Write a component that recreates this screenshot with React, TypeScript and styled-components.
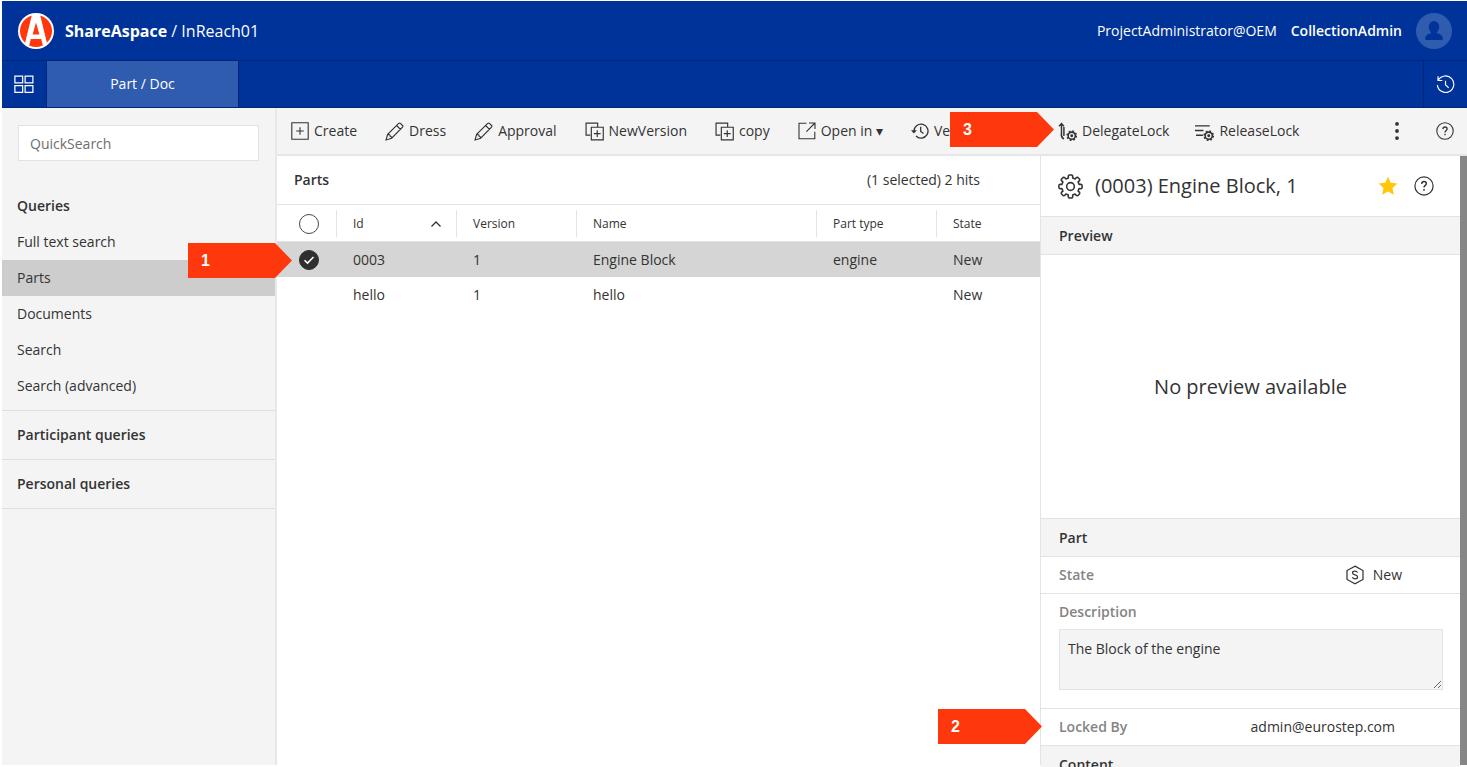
import React from "react";
import styled, { createGlobalStyle, css } from "styled-components";

const GlobalStyle = createGlobalStyle`
  *, *::before, *::after { box-sizing: border-box; }
  body {
    margin: 0;
    background: #fff;
    color: #333;
    font-family: "Open Sans", "Noto Sans", sans-serif;
    font-size: 14px;
    line-height: 20px;
  }
  button, input, textarea { font: inherit; color: inherit; }
  a { color: inherit; text-decoration: none; }
  ul { list-style: none; margin: 0; padding: 0; }
  h1, h2 { margin: 0; font-size: inherit; }
`;

const line = "#e3e3e3";

const Page = styled.div`
  display: flex;
  flex-direction: column;
  height: 100vh;
  padding: 1px 0 2px 2px;
  overflow: hidden;
`;

const TopBar = styled.header`
  display: flex;
  flex: none;
  align-items: center;
  justify-content: space-between;
  height: 60px;
  padding: 0 15px 0 16px;
  background: #003399;
  border-bottom: 1px solid #00267a;
  color: #fff;
`;

const Brand = styled.div`
  display: flex;
  align-items: center;
  gap: 11px;
  font-size: 16px;
`;

const User = styled.div`
  display: flex;
  align-items: center;
  gap: 14px;
`;

const UserRole = styled.span`
  font-weight: 600;
`;

const NavBar = styled.nav`
  display: flex;
  flex: none;
  height: 47px;
  background: #003399;
  border-bottom: 1px solid #00267a;
  color: #fff;
`;

const NavButton = styled.button<{ $end?: boolean }>`
  display: flex;
  align-items: center;
  justify-content: center;
  width: 44px;
  padding: 0;
  background: none;
  border: 0;
  ${(p) =>
    p.$end &&
    css`
      margin-left: auto;
      border-left: 1px solid #00267a;
    `}
`;

const NavTab = styled.a`
  display: flex;
  align-items: center;
  justify-content: center;
  width: 193px;
  background: #305cb0;
  border: 1px solid #00267a;
  border-width: 0 1px;
`;

const Body = styled.div`
  display: flex;
  flex: 1;
  min-height: 0;
`;

const Sidebar = styled.aside`
  flex: none;
  width: 275px;
  background: #f4f4f4;
  border-right: 2px solid #e8e8e8;
`;

const SearchBox = styled.input`
  display: block;
  width: 241px;
  height: 36px;
  margin: 17px 16px 27px;
  padding: 0 11px;
  background: #fff;
  border: 1px solid #e2e2e2;
  border-radius: 0;
  &::placeholder { color: #6e6e6e; opacity: 1; }
`;

const QueryGroup = styled.section<{ $open?: boolean }>`
  padding-bottom: ${(p) => (p.$open ? "6px" : "0")};
  border-bottom: 1px solid #dfdfdf;
`;

const QueryHeading = styled.h2<{ $compact?: boolean }>`
  padding: 0 15px;
  font-weight: 600;
  line-height: ${(p) => (p.$compact ? "36px" : "48px")};
`;

const QueryLink = styled.a<{ $active?: boolean }>`
  display: block;
  padding: 0 15px;
  line-height: 36px;
  background: ${(p) => (p.$active ? "#cdcdcd" : "transparent")};
`;

const Workspace = styled.div`
  display: flex;
  flex: 1;
  flex-direction: column;
  min-width: 0;
`;

const Toolbar = styled.div`
  position: relative;
  display: flex;
  flex: none;
  height: 48px;
  background: #f4f4f4;
  border-bottom: 2px solid #e6e6e6;
`;

const ToolGroup = styled.div<{ $side?: boolean }>`
  display: flex;
  align-items: center;
  min-width: 0;
  overflow: hidden;
  ${(p) =>
    p.$side
      ? css`
          flex: none;
          gap: 26px;
          width: 427px;
          padding: 0 13px 0 18px;
        `
      : css`
          flex: 1;
          gap: 28px;
          padding-left: 14px;
        `}
`;

const ToolButton = styled.button<{ $push?: boolean }>`
  display: flex;
  flex: none;
  align-items: center;
  gap: 5px;
  padding: 0;
  background: none;
  border: 0;
  white-space: nowrap;
  margin-left: ${(p) => (p.$push ? "auto" : "0")};
  margin-right: ${(p) => (p.$push ? "4px" : "0")};
`;

const Panels = styled.div`
  display: flex;
  flex: 1;
  min-height: 0;
`;

const ListPanel = styled.main`
  position: relative;
  flex: 1;
  min-width: 0;
`;

const ListHeader = styled.div`
  display: flex;
  align-items: center;
  justify-content: space-between;
  height: 49px;
  padding: 0 60px 0 17px;
  border-bottom: 1px solid ${line};
`;

const Title = styled.h2`
  font-weight: 600;
`;

const Grid = styled.table`
  width: 100%;
  table-layout: fixed;
  border-collapse: collapse;
  text-align: left;
`;

const HeadCell = styled.th`
  height: 37px;
  padding: 0;
  font-size: 12px;
  font-weight: 400;
  box-shadow: inset 0 -1px ${line};
`;

const HeadLabel = styled.div`
  display: flex;
  align-items: center;
  justify-content: space-between;
  height: 27px;
  padding: 0 14px 0 16px;
  border-left: 1px solid ${line};
`;

const Row = styled.tr<{ $selected?: boolean }>`
  background: ${(p) => (p.$selected ? "#d5d5d5" : "transparent")};
`;

const Cell = styled.td`
  height: 35px;
  padding: 0 17px;
`;

const PickCell = styled.td`
  padding: 0 0 0 22px;
`;

const Pick = styled.label`
  position: relative;
  display: block;
  width: 20px;
  height: 20px;
  svg { position: absolute; inset: 0; pointer-events: none; }
`;

const PickBox = styled.input<{ $bare?: boolean }>`
  display: block;
  appearance: none;
  width: 20px;
  height: 20px;
  margin: 0;
  border: 1px solid ${(p) => (p.$bare ? "transparent" : "#4a4a4a")};
  border-radius: 50%;
  &:checked { background: #2f2f2f; border-color: #2f2f2f; }
`;

const DetailPanel = styled.aside`
  flex: none;
  width: 427px;
  border-left: 1px solid ${line};
  border-right: 7px solid #868686;
`;

const DetailTitle = styled.div`
  display: flex;
  align-items: center;
  gap: 12px;
  height: 61px;
  padding: 0 26px 0 17px;
  border-bottom: 1px solid ${line};
`;

const DetailName = styled.h1`
  flex: 1;
  font-size: 20px;
  font-weight: 400;
  line-height: 28px;
`;

const IconButton = styled.button`
  display: flex;
  padding: 0;
  background: none;
  border: 0;
`;

const TitleActions = styled.div`
  display: flex;
  align-items: center;
  gap: 16px;
`;

const SectionBar = styled.h2`
  height: 38px;
  padding: 0 18px;
  background: #f4f4f4;
  border-bottom: 1px solid ${line};
  font-weight: 600;
  line-height: 38px;
`;

const Preview = styled.div`
  display: flex;
  align-items: center;
  justify-content: center;
  height: 264px;
  border-bottom: 1px solid ${line};
  font-size: 20px;
`;

const Field = styled.div<{ $inset: number }>`
  position: relative;
  display: flex;
  align-items: center;
  justify-content: space-between;
  height: 37px;
  padding: 0 ${(p) => p.$inset}px 0 18px;
  border-bottom: 1px solid ${line};
`;

const FieldName = styled.span`
  font-weight: 600;
  color: #848484;
`;

const FieldValue = styled.span`
  display: flex;
  align-items: center;
  gap: 8px;
`;

const NoteField = styled.div`
  height: 115px;
  padding: 8px 17px 0 18px;
  border-bottom: 1px solid ${line};
`;

const NoteLabel = styled.label`
  display: block;
  font-weight: 600;
  color: #848484;
`;

const NoteText = styled.textarea`
  display: block;
  width: 100%;
  height: 61px;
  margin-top: 7px;
  padding: 9px 8px;
  background: #f4f4f4;
  border: 1px solid ${line};
  border-radius: 0;
`;

const calloutPlace = {
  row: css`top: 87px; left: -89px;`,
  lock: css`top: 0; left: -103px;`,
  tool: css`top: 4px; right: 413px;`,
};

const Callout = styled.div<{ $at: keyof typeof calloutPlace }>`
  position: absolute;
  z-index: 2;
  width: 104px;
  height: 35px;
  padding-left: 13px;
  background: #ff370c;
  clip-path: polygon(0 0, 87px 0, 100% 50%, 87px 100%, 0 100%);
  color: #fff;
  font: bold 16px/35px "Liberation Sans", sans-serif;
  ${(p) => calloutPlace[p.$at]}
`;

type IconProps = { size?: number; children: React.ReactNode };
const Icon = ({ size = 18, children }: IconProps) => (
  <svg width={size} height={size} viewBox="0 0 18 18" fill="none" stroke="currentColor" strokeWidth="1.1" aria-hidden="true">
    {children}
  </svg>
);

const Logo = () => (
  <svg width="36" height="36" viewBox="0 0 36 36" aria-hidden="true">
    <circle cx="18" cy="18" r="18" fill="#fff" />
    <circle cx="18" cy="18" r="16" fill="#ff370c" />
    <path d="M14 1.500H22L29.300 31.500L25.300 34L23.200 26H12.800L10.700 34L6.700 31.500ZM18 9.500L14.600 21.500H21.400Z" fill="#fff" fillRule="evenodd" />
  </svg>
);

const Avatar = () => (
  <svg width="36" height="36" viewBox="0 0 36 36" aria-hidden="true">
    <circle cx="18" cy="18" r="18" fill="#305cb0" />
    <path d="M18 8a5.2 5.6 0 0 1 5.2 5.8c0 2.4-1 4.4-2.3 5.4v1c3 .6 5.8 2 6 5.4 0 1-.5 1.4-1.3 1.4H10.400c-.8 0-1.300-.4-1.300-1.400.2-3.400 3-4.800 6-5.400v-1c-1.300-1-2.300-3-2.300-5.400A5.200 5.600 0 0 1 18 8Z" fill="#003399" />
  </svg>
);

const TilesIcon = () => (
  <Icon size={20}>
    <path d="M.8 2h7v6h-7zM10 2h7v6h-7zM.8 10.500h7v6h-7zM10 10.500h7v6h-7z" />
  </Icon>
);

const HistoryIcon = () => (
  <Icon size={19}>
    <path d="M2.300 4.800A7.800 7.800 0 1 1 1.300 9.600M1.900 1.200V5.200H6M9 5.500V9.200L12 12.200" />
  </Icon>
);

const CreateIcon = () => (
  <Icon>
    <path d="M.8.8h16.400v16.400H.8zM9 5.200v7.600M5.200 9h7.600" />
  </Icon>
);

const PencilIcon = () => (
  <Icon size={19}>
    <path d="M1 17l1.500-5.300L13 1.300q.8-.6 1.600 0l2 2q.7.800 0 1.600L6.300 15.400zM11 3.300l3.700 3.700M2.500 11.700c1.800 0 2.600.8 2.400 1.800.9 0 1.500.8 1.400 1.900" />
  </Icon>
);

const CopyIcon = () => (
  <Icon size={19}>
    <path d="M5 12.500H1V1h11v4M6 5h11.300v12H6zM11.600 7.800v6.400M8.400 11h6.400" />
  </Icon>
);

const OpenIcon = () => (
  <Icon>
    <path d="M8.500 1.200H1v15.600h15.800V9.800M11 1h6v6M17 1L8.400 9.600" />
  </Icon>
);

const VersionIcon = () => (
  <Icon>
    <path d="M3 9a7 7 0 1 1 2 5M9.700 4.800V9.500l2.800 2" strokeWidth="1.300" />
    <path d="M0 8.300h5.800L2.900 11.500z" fill="currentColor" stroke="none" />
  </Icon>
);

const SmallGear = () => (
  <>
    <circle cx="13" cy="13" r="3.400" strokeWidth="1.500" />
    <circle cx="13" cy="13" r="4.400" strokeWidth="1.400" strokeDasharray="1.700 1.756" />
    <circle cx="13" cy="13" r="1.400" fill="currentColor" stroke="none" />
  </>
);

const DelegateIcon = () => (
  <Icon size={19}>
    <path d="M3.300 2v11.500M1 4L3.300 1.500 5.600 4M3 11.500q.3 4 2.600 4.400M5.600 4.800v8.500M5.500 16.200L3.600 13.600" strokeWidth="1.400" />
    <SmallGear />
  </Icon>
);

const ReleaseIcon = () => (
  <Icon size={19}>
    <path d="M0 3.700h14M0 8h8M1 12.500h6.500" strokeWidth="1.300" />
    <SmallGear />
  </Icon>
);

const MoreIcon = () => (
  <Icon>
    <g fill="currentColor" stroke="none">
      <circle cx="9" cy="1.900" r="1.900" />
      <circle cx="9" cy="9" r="1.900" />
      <circle cx="9" cy="16.100" r="1.900" />
    </g>
  </Icon>
);

const HelpIcon = ({ size = 18 }: { size?: number }) => (
  <Icon size={size}>
    <circle cx="9" cy="9" r="8.200" />
    <path d="M6.900 7.100C7 5.700 7.800 5 9 5s2.100.7 2.100 1.900C11.100 8.400 9 8.500 9 10.400M9 11.800v1.400" strokeWidth="1.300" />
  </Icon>
);

const toothed = (() => {
  const points: string[] = [];
  const at = (r: number, deg: number) => {
    const a = (deg * Math.PI) / 180;
    return `${(12 + r * Math.cos(a)).toFixed(2)} ${(12 + r * Math.sin(a)).toFixed(2)}`;
  };
  for (let i = 0; i < 8; i++) {
    const c = i * 45;
    points.push(at(8.5, c - 14), at(10.4, c - 12), at(11.200, c - 7), at(11.200, c + 7), at(10.4, c + 12), at(8.500, c + 14));
  }
  return `M${points.join("L")}Z`;
})();

const GearIcon = () => (
  <svg width="25" height="25" viewBox="0 0 24 24" fill="none" stroke="currentColor" strokeWidth="1.500" strokeLinejoin="round" aria-hidden="true">
    <path d={toothed} />
    <circle cx="12" cy="12" r="3.700" />
  </svg>
);

const StarIcon = () => (
  <svg width="20" height="20" viewBox="0 0 20 20" aria-hidden="true">
    <path d="M10 .8l2.800 6 6.600.8-4.900 4.500 1.300 6.600L10 15.500l-5.800 3.200 1.300-6.600L.6 7.600l6.600-.8z" fill="#ffc60a" />
  </svg>
);

const StateIcon = () => (
  <Icon size={20}>
    <path d="M9 1l7.200 4v8L9 17l-7.200-4V5z" />
    <path d="M11.300 6.800C10.800 5.900 10 5.600 9 5.600c-1.200 0-2.200.6-2.200 1.600 0 2.300 4.500 1.200 4.500 3.500 0 1-1 1.700-2.300 1.700-1.100 0-2-.4-2.400-1.300" />
  </Icon>
);

const tools = [
  { label: "Create", icon: <CreateIcon /> },
  { label: "Dress", icon: <PencilIcon /> },
  { label: "Approval", icon: <PencilIcon /> },
  { label: "NewVersion", icon: <CopyIcon /> },
  { label: "copy", icon: <CopyIcon /> },
  { label: "Open in ▾", icon: <OpenIcon /> },
  { label: "Versions", icon: <VersionIcon /> },
];

const queries = ["Full text search", "Parts", "Documents", "Search", "Search (advanced)"];

const columns = [
  { label: "Id", width: 120, sorted: true },
  { label: "Version", width: 120 },
  { label: "Name", width: 240 },
  { label: "Part type", width: 120 },
  { label: "State" },
];

const rows = [
  { values: ["0003", "1", "Engine Block", "engine", "New"], selected: true },
  { values: ["hello", "1", "hello", "", "New"], selected: false },
];

export default function App() {
  return (
    <Page>
      <GlobalStyle />
      <TopBar>
        <Brand>
          <Logo />
          <span>
            <b>ShareAspace</b> / InReach01
          </span>
        </Brand>
        <User>
          <span>ProjectAdministrator@OEM</span>
          <UserRole>CollectionAdmin</UserRole>
          <Avatar />
        </User>
      </TopBar>
      <NavBar>
        <NavButton aria-label="Spaces"><TilesIcon /></NavButton>
        <NavTab href="#part-doc">Part / Doc</NavTab>
        <NavButton $end aria-label="History"><HistoryIcon /></NavButton>
      </NavBar>
      <Body>
        <Sidebar>
          <SearchBox type="text" placeholder="QuickSearch" aria-label="QuickSearch" />
          <QueryGroup $open>
            <QueryHeading $compact>Queries</QueryHeading>
            <ul>
              {queries.map((q) => (
                <li key={q}>
                  <QueryLink href="#query" $active={q === "Parts"}>{q}</QueryLink>
                </li>
              ))}
            </ul>
          </QueryGroup>
          <QueryGroup><QueryHeading>Participant queries</QueryHeading></QueryGroup>
          <QueryGroup><QueryHeading>Personal queries</QueryHeading></QueryGroup>
        </Sidebar>
        <Workspace>
          <Toolbar>
            <ToolGroup>
              {tools.map((t) => (
                <ToolButton key={t.label}>{t.icon}{t.label}</ToolButton>
              ))}
            </ToolGroup>
            <ToolGroup $side>
              <ToolButton><DelegateIcon />DelegateLock</ToolButton>
              <ToolButton><ReleaseIcon />ReleaseLock</ToolButton>
              <ToolButton $push aria-label="More"><MoreIcon /></ToolButton>
              <ToolButton aria-label="Help"><HelpIcon /></ToolButton>
            </ToolGroup>
            <Callout $at="tool">3</Callout>
          </Toolbar>
          <Panels>
            <ListPanel>
              <ListHeader>
                <Title>Parts</Title>
                <span>(1 selected) 2 hits</span>
              </ListHeader>
              <Grid>
                <colgroup>
                  <col width={59} />
                  {columns.map((c) => <col key={c.label} width={c.width} />)}
                </colgroup>
                <thead>
                  <tr>
                    <HeadCell>
                      <PickCell as="div">
                        <Pick><PickBox type="checkbox" aria-label="Select all" /></Pick>
                      </PickCell>
                    </HeadCell>
                    {columns.map((c) => (
                      <HeadCell key={c.label}>
                        <HeadLabel>
                          {c.label}
                          {c.sorted && (
                            <svg width="12" height="8" viewBox="0 0 12 8" fill="none" stroke="currentColor" strokeWidth="1.300" aria-hidden="true">
                              <path d="M1.500 6.500L6 2l4.500 4.500" />
                            </svg>
                          )}
                        </HeadLabel>
                      </HeadCell>
                    ))}
                  </tr>
                </thead>
                <tbody>
                  {rows.map((r) => (
                    <Row key={r.values[0]} $selected={r.selected}>
                      <PickCell>
                        <Pick>
                          <PickBox type="checkbox" defaultChecked={r.selected} $bare aria-label={`Select ${r.values[0]}`} />
                          {r.selected && (
                            <svg width="20" height="20" viewBox="0 0 20 20" fill="none" stroke="#fff" strokeWidth="1.500" aria-hidden="true">
                              <path d="M5.500 10.300l3 2.800 6-6.200" />
                            </svg>
                          )}
                        </Pick>
                      </PickCell>
                      {r.values.map((v, i) => <Cell key={i}>{v}</Cell>)}
                    </Row>
                  ))}
                </tbody>
              </Grid>
              <Callout $at="row">1</Callout>
            </ListPanel>
            <DetailPanel>
              <DetailTitle>
                <GearIcon />
                <DetailName>(0003) Engine Block, 1</DetailName>
                <TitleActions>
                  <IconButton aria-label="Favourite"><StarIcon /></IconButton>
                  <IconButton aria-label="Help"><HelpIcon size={20} /></IconButton>
                </TitleActions>
              </DetailTitle>
              <SectionBar>Preview</SectionBar>
              <Preview>No preview available</Preview>
              <SectionBar>Part</SectionBar>
              <Field $inset={58}>
                <FieldName>State</FieldName>
                <FieldValue><StateIcon />New</FieldValue>
              </Field>
              <NoteField>
                <NoteLabel htmlFor="description">Description</NoteLabel>
                <NoteText id="description" defaultValue="The Block of the engine" />
              </NoteField>
              <Field $inset={65}>
                <Callout $at="lock">2</Callout>
                <FieldName>Locked By</FieldName>
                <FieldValue>admin@eurostep.com</FieldValue>
              </Field>
              <SectionBar>Content</SectionBar>
            </DetailPanel>
          </Panels>
        </Workspace>
      </Body>
    </Page>
  );
}
